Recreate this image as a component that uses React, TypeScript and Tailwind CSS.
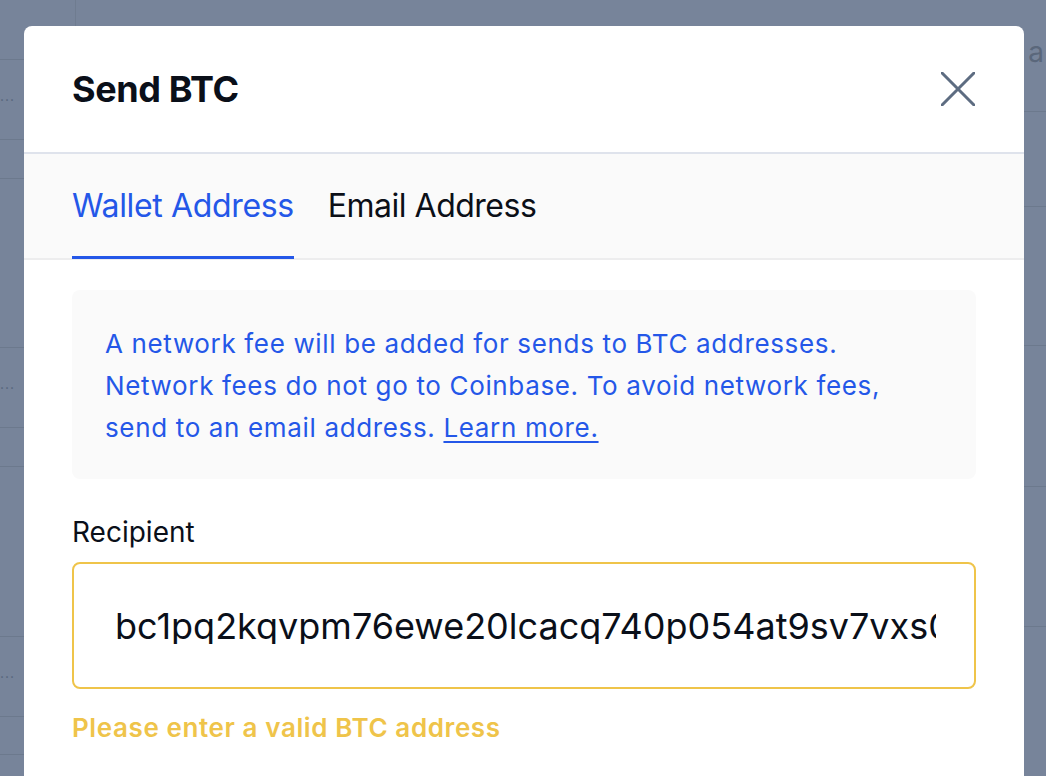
import React from "react";

const font = { fontFamily: 'Inter, "Noto Sans", "Liberation Sans", sans-serif' };

function Dots() {
  return <span className="text-[#56647a] text-[14px] leading-none tracking-[1px]">···</span>;
}

function LeftColumn() {
  const rows: { h: string; dots?: boolean }[] = [
    { h: "h-[60px]" },
    { h: "h-[80px]", dots: true },
    { h: "h-[39px]" },
    { h: "h-[169px]" },
    { h: "h-[80px]", dots: true },
    { h: "h-[39px]" },
    { h: "h-[170px]" },
    { h: "h-[80px]", dots: true },
    { h: "h-[38px]" },
  ];
  return (
    <div className="w-[76px] shrink-0 border-r border-[#6f7c90] flex flex-col">
      {rows.map((r, i) => (
        <div key={i} className={`${r.h} shrink-0 border-b border-[#6c798d] flex items-center`}>
          {r.dots ? <Dots /> : null}
        </div>
      ))}
    </div>
  );
}

function RightColumn() {
  const rows = ["h-[112px]", "h-[95px]", "h-[139px]", "h-[141px]", "h-[140px]"];
  return (
    <div className="flex-1 flex flex-col">
      {rows.map((h, i) => (
        <div key={i} className={`${h} shrink-0 border-b border-[#6c798d] flex justify-end`}>
          {i === 0 ? (
            <span className="mt-[38px] text-[28px] leading-none text-[#5a677b] mr-[2px]">a</span>
          ) : null}
        </div>
      ))}
    </div>
  );
}

export default function App() {
  return (
    <div className="relative w-[1046px] h-[776px] overflow-hidden bg-[#77849a] flex" style={font}>
      <LeftColumn />
      <RightColumn />

      {/* Modal */}
      <div className="absolute left-[24px] top-[26px] w-[1000px] h-[760px] bg-white rounded-t-[8px] flex flex-col">
        <div className="h-[128px] shrink-0 border-b-2 border-[#dfe3ec] flex items-center justify-between pl-[48px] pr-[49px]">
          <h1 className="text-[36px] font-bold text-[#0a0f19] leading-none tracking-[-0.4px]">Send BTC</h1>
          <button className="w-[34px] h-[34px] flex items-center justify-center" aria-label="Close">
            <svg width="34" height="34" viewBox="0 0 34 34" fill="none">
              <path d="M1 1 L33 33 M33 1 L1 33" stroke="#5d6c81" strokeWidth="3" strokeLinecap="round" />
            </svg>
          </button>
        </div>

        <div className="h-[106px] shrink-0 bg-[#fafafa] border-b-2 border-[#ededee] flex px-[48px] gap-[34px]">
          <div className="relative h-full flex items-center">
            <span className="text-[32px] leading-none text-[#2457e8] tracking-[-0.35px]">Wallet Address</span>
            <span className="absolute left-0 right-0 bottom-[-1px] h-[3px] bg-[#2457e8]" />
          </div>
          <div className="relative h-full flex items-center">
            <span className="text-[32px] leading-none text-[#0b0f17] tracking-[-0.5px]">Email Address</span>
          </div>
        </div>

        <div className="px-[48px] pt-[30px] flex flex-col">
          <div className="h-[189px] bg-[#fafafa] rounded-[8px] pl-[33px] pr-[24px] pt-[33px]">
            <p className="text-[26px] leading-[42px] text-[#2457e8] whitespace-nowrap tracking-[0.65px]">
              A network fee will be added for sends to BTC addresses.
              <br />
              Network fees do not go to Coinbase. To avoid network fees,
              <br />
              send to an email address.{" "}
              <a className="underline underline-offset-[4px] decoration-[1.5px]">Learn more.</a>
            </p>
          </div>

          <label className="mt-[36px] text-[28px] leading-[34px] text-[#0a0f19]">Recipient</label>

          <div className="mt-[13px] h-[127px] border-2 border-[#efc44a] rounded-[8px] flex items-center pl-[41px] pr-[38px]">
            <div className="flex-1 overflow-hidden whitespace-nowrap text-[36px] leading-none text-[#0a0f19]">
              bc1pq2kqvpm76ewe20lcacq740p054at9sv7vxs0mhdq8k3x
            </div>
          </div>

          <p className="mt-[23px] text-[26px] leading-[31px] font-semibold text-[#efc44a] tracking-[0.6px]">
            Please enter a valid BTC address
          </p>
        </div>
      </div>
    </div>
  );
}
